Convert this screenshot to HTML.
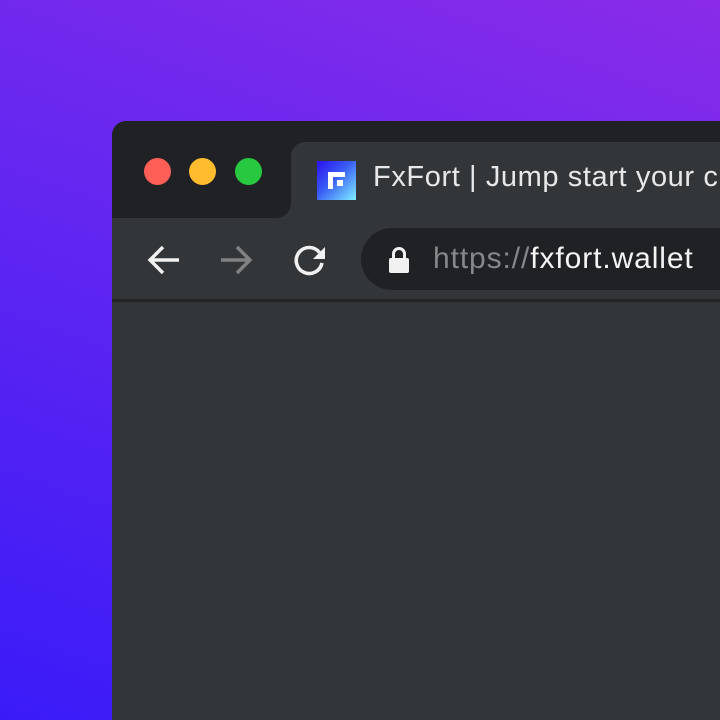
<!DOCTYPE html>
<html><head><meta charset="utf-8"><style>
*{margin:0;padding:0;box-sizing:border-box}
html,body{width:720px;height:720px;overflow:hidden}
body{position:relative;background:linear-gradient(200deg,#8a2be8 0%,#6a28ef 35%,#3a1bf8 100%);font-family:"Liberation Sans",sans-serif}
.win{position:absolute;left:112px;top:121px;width:608px;height:599px;background:#202124;border-radius:14px 0 0 0;overflow:hidden}
.dot{position:absolute;top:158px;width:27px;height:27px;border-radius:50%}
.tab{position:absolute;left:291px;top:142px;width:429px;height:80px;background:#323639;border-radius:14px 0 0 0}
.tool{position:absolute;left:112px;top:218px;width:608px;height:82px;background:#323639}
.tool:before{content:"";position:absolute;left:165px;top:-14px;width:14px;height:14px;background:radial-gradient(circle at 0 0,#202124 13.5px,#323639 14px)}
.line{position:absolute;left:112px;top:299px;width:608px;height:3px;background:#242628}
.content{position:absolute;left:112px;top:302px;width:608px;height:418px;background:#323639}
.omni{position:absolute;left:361px;top:228px;width:400px;height:62px;background:#202124;border-radius:31px}
.title{position:absolute;left:373px;top:161px;font-size:29px;color:#e8e8e8;white-space:nowrap;letter-spacing:0.6px}
.url{position:absolute;left:433px;top:242px;font-size:30px;white-space:nowrap;letter-spacing:0.9px}
</style></head><body>
<div class="win"></div>
<div class="dot" style="left:144px;background:#ff5f57"></div>
<div class="dot" style="left:189px;background:#febc2e"></div>
<div class="dot" style="left:235px;background:#28c840"></div>
<div class="tab"></div>
<div class="tool"></div>
<div class="line"></div>
<div class="content"></div>
<svg style="position:absolute;left:317px;top:161px" width="39" height="39" viewBox="0 0 39 39">
<defs><linearGradient id="g" x1="0" y1="0" x2="1" y2="1"><stop offset="0" stop-color="#2a10f0"/><stop offset="0.45" stop-color="#3a5ef5"/><stop offset="1" stop-color="#7ff0ff"/></linearGradient></defs>
<rect width="39" height="39" fill="url(#g)"/>
<path d="M11 11h17v5H16v12h-5z" fill="#fff"/><rect x="20" y="19" width="6" height="6" fill="#fff"/>
</svg>
<div class="title">FxFort | Jump start your cr</div>
<svg style="position:absolute;left:146px;top:243px" width="36" height="34" viewBox="0 0 36 34" fill="none" stroke-width="3.4">
<path d="M33 17H5M17 4L4 17l13 13" stroke="#f1f1f1"/></svg>
<svg style="position:absolute;left:219px;top:243px" width="36" height="34" viewBox="0 0 36 34" fill="none" stroke-width="3.4">
<path d="M2 17h28M18 4l13 13-13 13" stroke="#808284"/></svg>
<svg style="position:absolute;left:292px;top:243px" width="36" height="34" viewBox="0 0 36 34" fill="none">
<path d="M27.5 9.5A13 13 0 1 0 30 20" stroke="#f1f1f1" stroke-width="3.6"/>
<path d="M33 4v12H21z" fill="#f1f1f1"/></svg>
<div class="omni"></div>
<svg style="position:absolute;left:388px;top:246px" width="22" height="28" viewBox="0 0 22 28">
<path d="M5.5 12V8a5.5 5.5 0 0 1 11 0v4" fill="none" stroke="#f1f1f1" stroke-width="3"/>
<rect x="1" y="12" width="20" height="15" rx="2" fill="#f1f1f1"/></svg>
<div class="url"><span style="color:#85878a">https://</span><span style="color:#f4f4f4">fxfort.wallet</span></div>
</body></html>
